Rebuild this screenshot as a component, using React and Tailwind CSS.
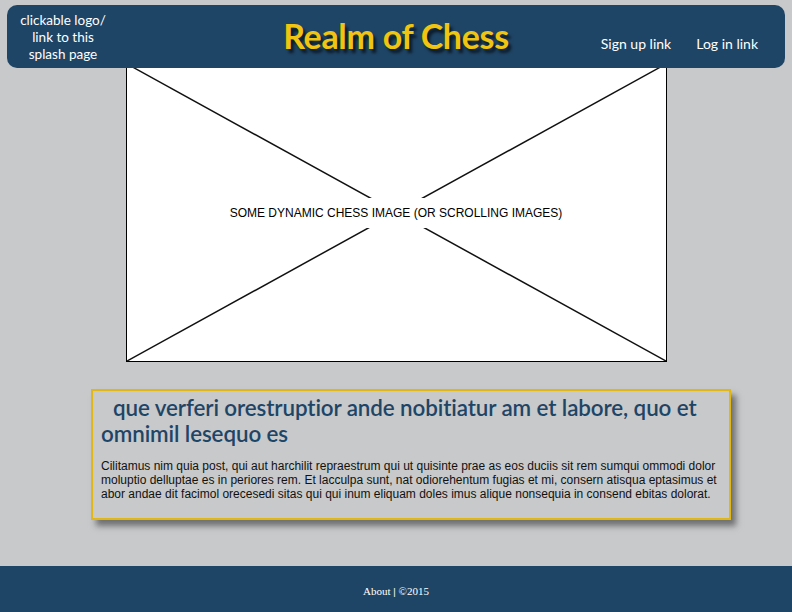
import React from 'react';

const navy = 'bg-[#1f4566]';

const Header = () => (
    <header className={`relative z-10 mx-[7px] mt-[5px] h-[63px] rounded-[10px] ${navy} grid grid-cols-[1fr_auto_1fr] items-center text-white font-['Lato',sans-serif]`}>
        {/* logo placeholder */}
        <a href="#" className="block justify-self-start ml-[10px] w-[92px] text-center text-[13.5px] leading-[17px] pt-[1px]">
            clickable logo/ link to this splash page
        </a>
        <h1 className="text-[34px] font-bold text-[#f1c40f] tracking-[-0.3px] [text-shadow:3px_4px_3px_#0b1a28] -mt-[2px]">
            Realm of Chess
        </h1>
        <nav className="justify-self-end flex gap-[25px] pr-[27px] pt-[13px] text-[14px]">
            <a href="#">Sign up link</a>
            <a href="#">Log in link</a>
        </nav>
    </header>
);

const ImagePlaceholder = () => (
    <div className="relative mx-auto -mt-[5px] w-[541px] h-[299px] bg-white border-[1.5px] border-black">
        <svg className="absolute inset-0 w-full h-full" viewBox="0 0 538 296" preserveAspectRatio="none">
            <line x1="0" y1="0" x2="538" y2="296" stroke="#111" strokeWidth="1.5" />
            <line x1="538" y1="0" x2="0" y2="296" stroke="#111" strokeWidth="1.5" />
        </svg>
        <div className="absolute inset-0 flex items-center justify-center">
            <span className="bg-white px-[4px] py-[6px] text-[12px] font-['Liberation_Sans',Arial,sans-serif] text-black">
                SOME DYNAMIC CHESS IMAGE (OR SCROLLING IMAGES)
            </span>
        </div>
    </div>
);

export default function App() {
    return (
        <div className="w-[792px] h-[612px] bg-[#c8c9cb] flex flex-col overflow-hidden">
            <Header />
            <ImagePlaceholder />

            <section className="mx-[91px] mt-[27px] w-[640px] h-[131px] border-2 border-[#e2b714] shadow-[5px_6px_6px_rgba(40,40,40,0.55)] px-[8px] pt-[4px]">
                <h2 className="indent-3 text-[22.4px] leading-[26px] font-semibold text-[#1f4566] font-['Lato',sans-serif] tracking-[-0.1px]">
                    que verferi orestruptior ande nobitiatur am et labore, quo et omnimil lesequo es
                </h2>
                <p className="mt-[12px] text-[12px] leading-[14px] text-[#111] font-['Liberation_Sans',Arial,sans-serif]">
                    Cilitamus nim quia post, qui aut harchilit repraestrum qui ut quisinte prae as eos duciis sit rem sumqui ommodi dolor moluptio delluptae es in periores rem. Et lacculpa sunt, nat odiorehentum fugias et mi, consern atisqua eptasimus et abor andae dit facimol orecesedi sitas qui qui inum eliquam doles imus alique nonsequia in consend ebitas dolorat.
                </p>
            </section>

            <footer className={`mt-auto h-[46px] ${navy} flex items-center justify-center pt-[4px] text-white text-[11px] font-['Liberation_Serif',serif]`}>
                <span>About <span className="font-bold">|</span> ©2015</span>
            </footer>
        </div>
    );
}
